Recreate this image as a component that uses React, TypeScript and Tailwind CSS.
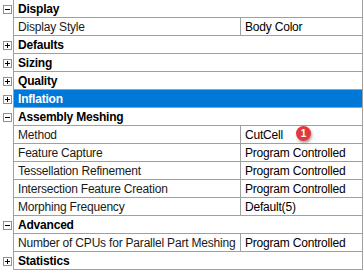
import React from "react";

type Row =
  | { kind: "cat"; label: string; open: boolean; selected?: boolean }
  | { kind: "prop"; label: string; value: string; badge?: string };

const rows: Row[] = [
  { kind: "cat", label: "Display", open: true },
  { kind: "prop", label: "Display Style", value: "Body Color" },
  { kind: "cat", label: "Defaults", open: false },
  { kind: "cat", label: "Sizing", open: false },
  { kind: "cat", label: "Quality", open: false },
  { kind: "cat", label: "Inflation", open: false, selected: true },
  { kind: "cat", label: "Assembly Meshing", open: true },
  { kind: "prop", label: "Method", value: "CutCell", badge: "1" },
  { kind: "prop", label: "Feature Capture", value: "Program Controlled" },
  { kind: "prop", label: "Tessellation Refinement", value: "Program Controlled" },
  { kind: "prop", label: "Intersection Feature Creation", value: "Program Controlled" },
  { kind: "prop", label: "Morphing Frequency", value: "Default(5)" },
  { kind: "cat", label: "Advanced", open: true },
  { kind: "prop", label: "Number of CPUs for Parallel Part Meshing", value: "Program Controlled" },
  { kind: "cat", label: "Statistics", open: false },
];

function Expander({ open }: { open: boolean }) {
  return (
    <svg width="9" height="9" viewBox="0 0 9 9" className="block">
      <rect x="0.5" y="0.5" width="8" height="8" fill="#fff" stroke="#919191" />
      <line x1="2" y1="4.5" x2="7" y2="4.5" stroke="#000" />
      {!open && <line x1="4.5" y1="2" x2="4.5" y2="7" stroke="#000" />}
    </svg>
  );
}

export default function App() {
  return (
    <div
      className="w-[364px] h-[278px] bg-white text-[12px] tracking-[-0.2px] text-black leading-none"
      style={{ fontFamily: '"Liberation Sans", Arial, sans-serif' }}
    >
      {rows.map((row) => (
        <div key={row.label} className="flex h-[18px]">
          <div className="flex w-[13px] shrink-0 items-center justify-start pl-[3px]">
            {row.kind === "cat" && <Expander open={row.open} />}
          </div>
          {row.kind === "cat" ? (
            <div
              className={
                row.selected
                  ? "flex w-[350px] items-center border-b border-l border-r border-[#a0a0a0] bg-[#0078d7] pl-[4px] font-bold text-white"
                  : "flex w-[350px] items-center border-b border-l border-r border-[#a0a0a0] pl-[4px] font-bold"
              }
            >
              {row.label}
            </div>
          ) : (
            <div className="flex w-[350px] border-b border-l border-r border-[#a0a0a0]">
              <div className="flex w-[227px] shrink-0 items-center overflow-hidden whitespace-nowrap border-r border-[#a0a0a0] pl-[4px] text-[#1a1a1a]">
                {row.label}
              </div>
              <div className="relative flex flex-1 items-center whitespace-nowrap pl-[4px]">
                {row.value}
                {row.badge && (
                  <span className="absolute left-[55px] top-0 flex h-[15px] w-[15px] items-center justify-center rounded-full bg-[#e0393e] text-[10px] font-bold tracking-normal text-white shadow-[1px_2px_3px_rgba(0,0,0,0.35)]">
                    {row.badge}
                  </span>
                )}
              </div>
            </div>
          )}
        </div>
      ))}
    </div>
  );
}
